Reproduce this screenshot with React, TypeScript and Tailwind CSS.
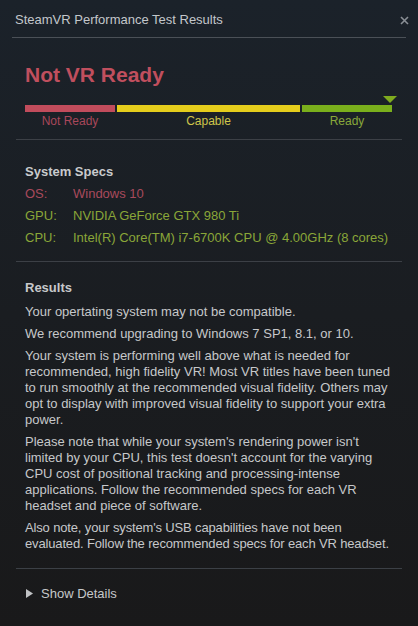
import React from "react";

export default function App() {
  const paras = [
    "Your opertating system may not be compatible.",
    "We recommend upgrading to Windows 7 SP1, 8.1, or 10.",
    "Your system is performing well above what is needed for recommended, high fidelity VR! Most VR titles have been tuned to run smoothly at the recommended visual fidelity. Others may opt to display with improved visual fidelity to support your extra power.",
    "Please note that while your system's rendering power isn't limited by your CPU, this test doesn't account for the varying CPU cost of positional tracking and processing-intense applications. Follow the recommended specs for each VR headset and piece of software.",
  ];
  return (
    <div
      className="w-[418px] h-[626px] overflow-hidden bg-gradient-to-b from-[#1b222a] via-[#1a1d21] to-[#19191a] text-[#c9cbcd]"
      style={{ fontFamily: '"Liberation Sans", Arial, sans-serif' }}
    >
      <div className="flex items-center justify-between h-[37px] pl-[15px] pr-[9px] pt-[3px]">
        <span className="text-[13px] text-[#c3c7cb]">SteamVR Performance Test Results</span>
        <svg width="9" height="9" viewBox="0 0 9 9">
          <path d="M1 1 L8 8 M8 1 L1 8" stroke="#8a8f95" strokeWidth="1.6" />
        </svg>
      </div>
      <div className="mx-[12px] h-px bg-[#4b5057]" />

      <div className="px-[25px] pt-[25px]">
        <div className="text-[21px] leading-[24px] font-bold text-[#c04f5e]">Not VR Ready</div>
        <div className="relative mt-[18px] w-[367px]">
          <svg width="14" height="7" viewBox="0 0 14 7" className="absolute right-[-5px] top-[-9px]">
            <path d="M0 0 L14 0 L7 7 Z" fill="#7fab1f" />
          </svg>
          <div className="flex gap-[2px] h-[7px]">
            <div className="w-[90px] bg-[#c14c5c]" />
            <div className="w-[183px] bg-[#e5cd1c]" />
            <div className="w-[90px] bg-[#7aaf1c]" />
          </div>
          <div className="flex gap-[2px] text-[12px] leading-[16px] mt-[1px]">
            <div className="w-[90px] text-center text-[#a8475a]">Not Ready</div>
            <div className="w-[183px] text-center text-[#cfc54a]">Capable</div>
            <div className="w-[90px] text-center text-[#88a83a]">Ready</div>
          </div>
        </div>
      </div>

      <div className="mx-[16px] mt-[10px] h-px bg-[#3c4046]" />

      <div className="px-[25px] pt-[21px] text-[13px] leading-[22px]">
        <div className="font-bold text-[#c9cbcd]">System Specs</div>
        <div className="flex text-[#a84a5c]">
          <span className="w-[48px]">OS:</span>
          <span>Windows 10</span>
        </div>
        <div className="flex text-[#8aa638]">
          <span className="w-[48px]">GPU:</span>
          <span>NVIDIA GeForce GTX 980 Ti</span>
        </div>
        <div className="flex text-[#8aa638]">
          <span className="w-[48px]">CPU:</span>
          <span>Intel(R) Core(TM) i7-6700K CPU @ 4.00GHz (8 cores)</span>
        </div>
      </div>

      <div className="mx-[16px] mt-[12px] h-px bg-[#3c4046]" />

      <div className="px-[25px] pt-[18px] text-[13px] leading-[16px] text-[#c6c8ca]">
        <div className="font-bold mb-[8px]">Results</div>
        <div className="flex flex-col gap-[6px]">
          {paras.map((p, i) => (
            <p key={i}>{p}</p>
          ))}
          <p className="tracking-[-0.15px]">
            Also note, your system's USB capabilities have not been evaluated. Follow the recommended specs for each VR headset.
          </p>
        </div>
      </div>

      <div className="mx-[16px] mt-[16px] h-px bg-[#3c4046]" />

      <div className="flex items-center gap-[8px] px-[26px] pt-[15px] text-[13px] text-[#c6c8ca]">
        <svg width="7" height="9" viewBox="0 0 7 9">
          <path d="M0 0 L7 4.5 L0 9 Z" fill="#c0c2c4" />
        </svg>
        <span>Show Details</span>
      </div>
    </div>
  );
}
